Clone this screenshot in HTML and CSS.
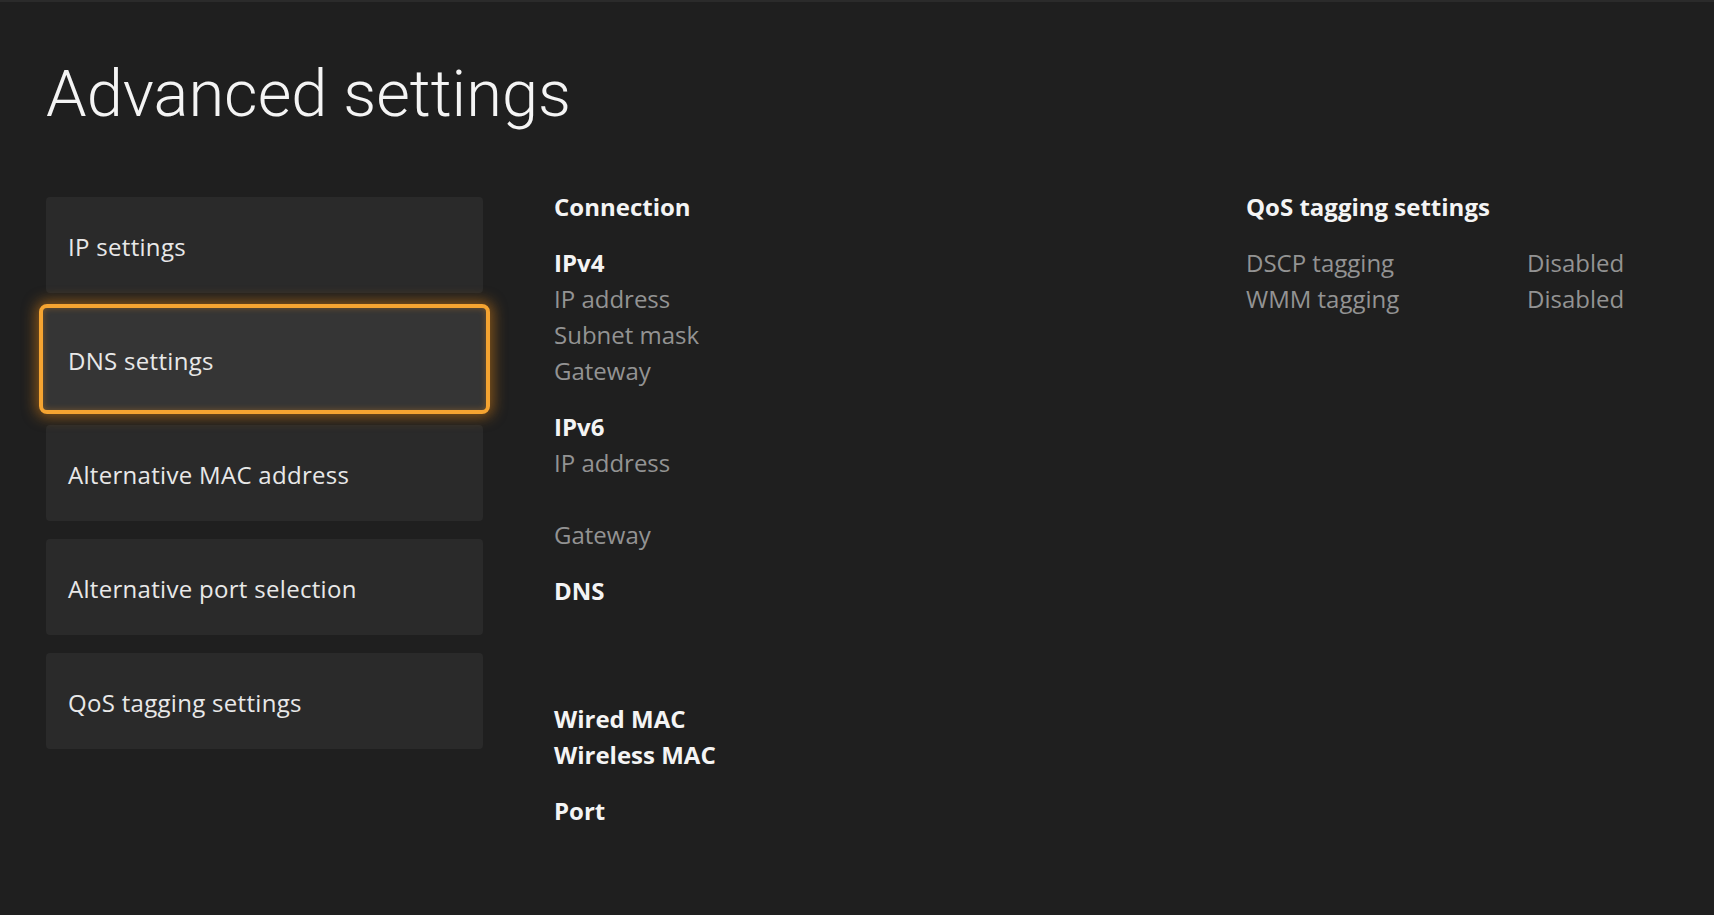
FILE: index.html
```html
<!DOCTYPE html>
<html lang="en">
<head>
    <meta charset="UTF-8">
    <meta name="viewport" content="width=device-width, initial-scale=1.0">
    <title>Advanced settings</title>
    <link rel="stylesheet" href="styles.css">
</head>
<body>
    <div class="screen">
        <h1 class="page-title">Advanced settings</h1>

        <div class="layout">
            <ul class="menu">
                <li class="menu-item">IP settings</li>
                <li class="menu-item focused">DNS settings</li>
                <li class="menu-item">Alternative MAC address</li>
                <li class="menu-item">Alternative port selection</li>
                <li class="menu-item">QoS tagging settings</li>
            </ul>

            <div class="details">
                <div class="group">
                    <div class="head">Connection</div>
                </div>
                <div class="group">
                    <div class="head">IPv4</div>
                    <div class="row">IP address</div>
                    <div class="row">Subnet mask</div>
                    <div class="row">Gateway</div>
                </div>
                <div class="group">
                    <div class="head">IPv6</div>
                    <div class="row">IP address</div>
                    <div class="row"></div>
                    <div class="row">Gateway</div>
                </div>
                <div class="group">
                    <div class="head">DNS</div>
                    <div class="row"></div>
                    <div class="row"></div>
                </div>
                <div class="group">
                    <div class="head">Wired MAC</div>
                    <div class="head">Wireless MAC</div>
                </div>
                <div class="group">
                    <div class="head">Port</div>
                </div>
            </div>

            <div class="qos">
                <div class="group">
                    <div class="head">QoS tagging settings</div>
                </div>
                <div class="group">
                    <div class="pair">
                        <span class="row">DSCP tagging</span>
                        <span class="row">Disabled</span>
                    </div>
                    <div class="pair">
                        <span class="row">WMM tagging</span>
                        <span class="row">Disabled</span>
                    </div>
                </div>
            </div>
        </div>
    </div>
</body>
</html>
```

FILE: styles.css
```css
* {
    margin: 0;
    padding: 0;
    box-sizing: border-box;
}

html, body {
    height: 100%;
}

body {
    background: #1f1f1f;
    color: #ececec;
    font-family: 'Open Sans', 'Noto Sans', sans-serif;
    border-top: 2px solid #2b2b2b;
    overflow: hidden;
}

.screen {
    padding: 0 46px;
}

.page-title {
    font-family: 'Roboto', sans-serif;
    font-weight: 300;
    font-size: 65px;
    line-height: 80px;
    color: #f4f4f4;
    margin-top: 52px;
}

.layout {
    display: flex;
    margin-top: 63px;
}

/* left navigation */
.menu {
    list-style: none;
    width: 437px;
    display: flex;
    flex-direction: column;
    gap: 18px;
}

.menu-item {
    height: 96px;
    background: #2a2a2a;
    border-radius: 4px;
    padding: 0 22px;
    display: flex;
    align-items: center;
    font-size: 24px;
    letter-spacing: 0.3px;
    color: #e8e8e8;
    padding-top: 3px;
}

.menu-item.focused {
    position: relative;
    margin: -7px -7px;
    height: 110px;
    padding: 3px 25px 0;
    background: #353535;
    border: 4px solid #f5a431;
    border-radius: 8px;
    box-shadow: 0 0 14px 3px rgba(240, 140, 20, 0.5), inset 0 0 6px rgba(245, 150, 30, 0.35);
}

/* info columns */
.details {
    margin-left: 71px;
    width: 692px;
    margin-top: -8px;
}

.qos {
    margin-top: -8px;
}

.group + .group {
    margin-top: 20px;
}

.head,
.row {
    font-size: 24px;
    line-height: 36px;
    height: 36px;
}

.head {
    font-weight: 700;
    color: #f4f4f4;
}

.row {
    color: #939393;
}

.pair {
    display: flex;
}

.pair .row:first-child {
    width: 281px;
}
```
